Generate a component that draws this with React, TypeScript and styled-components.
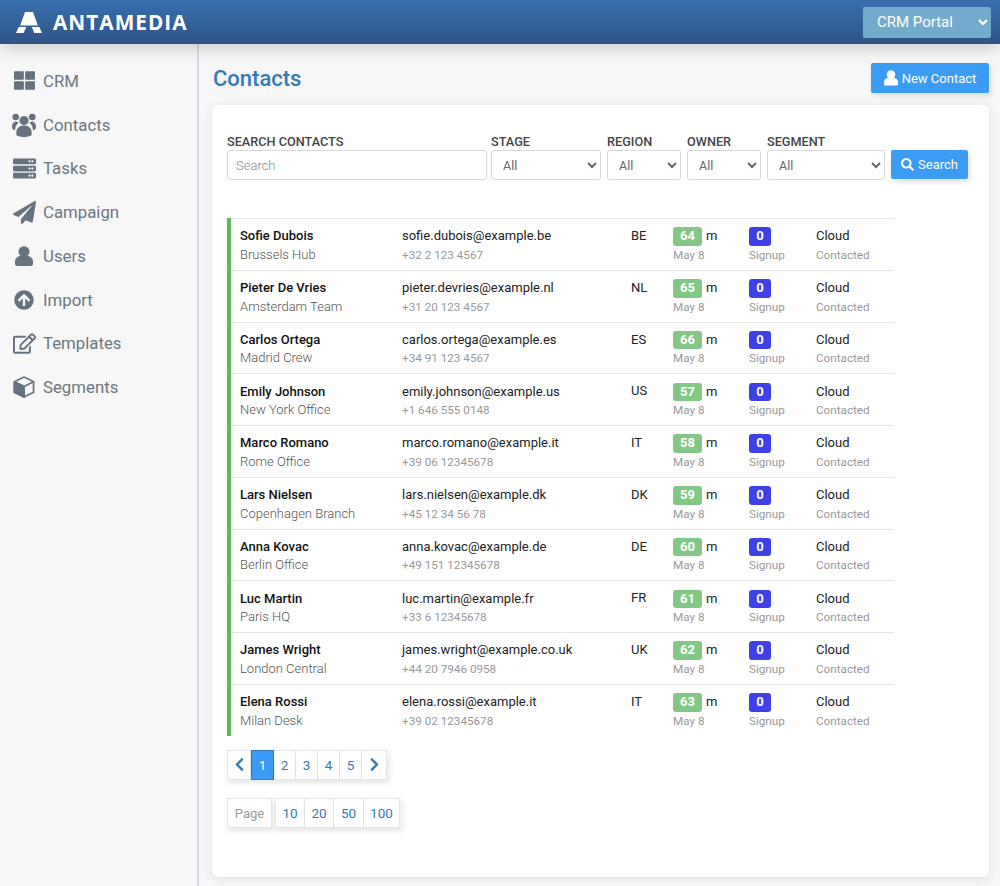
import React from "react"
import styled, { createGlobalStyle } from "styled-components"
import {
  FaThLarge,
  FaServer,
  FaPaperPlane,
  FaArrowCircleUp,
  FaRegEdit,
  FaSearch,
  FaChevronLeft,
  FaChevronRight,
} from "react-icons/fa"

const GlobalStyle = createGlobalStyle`
  html, body {
    margin: 0;
    padding: 0;
    height: 100%;
    overflow: hidden;
    background: #f7f7f7;
    font-family: Roboto, "Liberation Sans", Arial, sans-serif;
    font-size: 13px;
    color: #222;
  }
  * { box-sizing: border-box; }
`

const Page = styled.div`
  display: flex;
  flex-direction: column;
  height: 886px;
`
const Header = styled.header`
  position: relative;
  z-index: 2;
  flex: 0 0 44px;
  display: flex;
  align-items: center;
  justify-content: space-between;
  padding: 0 9px 0 16px;
  background: linear-gradient(#3a6fb0, #2f5384);
  box-shadow: 0 2px 18px rgba(0, 0, 0, 0.22);
`
const Brand = styled.div`
  display: flex;
  align-items: center;
  gap: 11px;
`
const BrandName = styled.span`
  font-family: "Open Sans", "Liberation Sans", sans-serif;
  font-weight: 700;
  font-size: 20.8px;
  letter-spacing: 1px;
  color: #fff;
`
const PortalSelect = styled.select`
  width: 128px;
  height: 31px;
  padding: 0 0 0 10px;
  border: none;
  border-radius: 2px;
  background-color: #74abcd;
  color: #fff;
  font-family: inherit;
  font-size: 15px;
`
const Body = styled.div`
  flex: 1;
  display: flex;
  min-height: 0;
`
const Sidebar = styled.nav`
  flex: 0 0 199px;
  display: flex;
  flex-direction: column;
  padding-top: 15px;
  border-right: 2px solid #cfdbe6;
  background: #f7f7f7;
`
const NavItem = styled.a`
  display: flex;
  align-items: center;
  height: 43.75px;
  color: #6b7680;
  font-size: 16.8px;
`
const NavIcon = styled.span`
  flex: 0 0 24px;
  display: flex;
  align-items: center;
  justify-content: center;
  margin: 0 7px 0 12px;
  color: #66727d;
`
const Main = styled.main`
  flex: 1;
  display: flex;
  flex-direction: column;
  min-width: 0;
  padding: 19px 11px 9px 13px;
`
const TitleRow = styled.div`
  display: flex;
  align-items: center;
  justify-content: space-between;
  height: 30px;
  margin-bottom: 12px;
`
const Title = styled.h1`
  margin: 0 0 0 1px;
  font-size: 22px;
  font-weight: 500;
  color: #337ab7;
`
const PrimaryButton = styled.button<{ $width: number; $height: number }>`
  display: inline-flex;
  align-items: center;
  justify-content: center;
  gap: 4px;
  height: ${(p) => p.$height}px;
  width: ${(p) => p.$width}px;
  padding: 0;
  border: none;
  border-radius: 2px;
  background: #3a9cf4;
  color: #fff;
  font-family: inherit;
  font-size: 13px;
  box-shadow: 2px 3px 6px rgba(0, 0, 0, 0.12);
`
const SearchButton = styled(PrimaryButton)`
  margin-bottom: 1px;
`
const Card = styled.section`
  flex: 1;
  padding: 28px 15px 0;
  border-radius: 6px;
  background: #fff;
  box-shadow: 0 2px 10px rgba(0, 0, 0, 0.1);
`
const Filters = styled.form`
  display: flex;
  align-items: flex-end;
  margin-bottom: 38px;
`
const Field = styled.label<{ $width: number; $gap: number }>`
  display: flex;
  flex-direction: column;
  flex: 0 0 ${(p) => p.$width}px;
  margin-right: ${(p) => p.$gap}px;
`
const FieldLabel = styled.span`
  height: 17px;
  font-size: 12.7px;
  font-weight: 500;
  line-height: 17px;
  color: #444;
  text-transform: uppercase;
  white-space: nowrap;
`
const TextInput = styled.input`
  height: 30px;
  padding: 0 8px;
  border: 1px solid #d9d9d9;
  border-radius: 3px;
  font-family: inherit;
  font-size: 13px;
  font-weight: 300;
  &::placeholder { color: #8a8a8a; }
`
const Select = styled.select`
  height: 30px;
  padding: 0 0 0 7px;
  border: 1px solid #d9d9d9;
  border-radius: 3px;
  background-color: #fff;
  color: #666;
  font-family: inherit;
  font-size: 12.5px;
`
const Rows = styled.div`
  width: 667px;
  border-left: 4px solid #5cb85c;
`
const Row = styled.div`
  display: grid;
  grid-template-columns: 162px 229px 42px 76px 67px 1fr;
  align-items: center;
  height: 51.75px;
  padding: 3px 0 0 9px;
  border-top: 1px solid #e6e6e6;
`
const Cell = styled.div`
  display: flex;
  flex-direction: column;
  line-height: 18.4px;
  white-space: nowrap;
`
const CountryCell = styled(Cell)`
  align-self: start;
  margin-top: 5px;
`
const Name = styled.strong`
  font-weight: 500;
  color: #111;
`
const Place = styled.span`
  font-weight: 300;
  color: #555;
`
const Muted = styled.span`
  font-size: 11.7px;
  color: #999;
`
const ScoreLine = styled.span`
  display: flex;
  align-items: center;
  gap: 4px;
`
const Badge = styled.span<{ $width: number; $bg: string }>`
  display: inline-flex;
  align-items: center;
  justify-content: center;
  width: ${(p) => p.$width}px;
  height: 18.4px;
  border-radius: 3px;
  background: ${(p) => p.$bg};
  color: #fff;
  font-weight: 700;
`
const Pager = styled.div<{ $top: number }>`
  display: flex;
  width: fit-content;
  margin-top: ${(p) => p.$top}px;
`
const PageCell = styled.a<{
  $width: number
  $gap?: number
  $joined?: boolean
  $active?: boolean
  $muted?: boolean
}>`
  display: flex;
  align-items: center;
  justify-content: center;
  width: ${(p) => p.$width}px;
  height: 30px;
  padding-top: ${(p) => (p.$muted ? 2 : 0)}px;
  margin-left: ${(p) => p.$gap ?? 0}px;
  border: 1px solid ${(p) => (p.$active ? "#337ab7" : "#e6e6e6")};
  border-left-width: ${(p) => (p.$joined ? 0 : 1)}px;
  background: ${(p) => (p.$active ? "#3a9cf4" : "#fff")};
  color: ${(p) => (p.$active ? "#fff" : p.$muted ? "#999" : "#337ab7")};
  box-shadow: 2px 3px 6px rgba(0, 0, 0, 0.1);
  font-size: ${(p) => (p.$muted ? 13 : 13.5)}px;
`

type IconProps = { size?: number }

const Logo = () => (
  <svg width="26" height="21" viewBox="0 0 26 21" fill="#fff">
    <path d="M9 0h8l4.800 13.500H4.200z" />
    <path d="M2.600 15h7.700L7.600 21H0z" />
    <path d="M15.700 15h7.700L26 21h-7.600z" />
  </svg>
)

const PersonIcon = ({ size = 18 }: IconProps) => (
  <svg width={size} height={(size * 20) / 18} viewBox="0 0 18 20" fill="currentColor">
    <circle cx="9" cy="5.700" r="5.500" />
    <path d="M0 15.500c0-3.500 3-5.500 6-5.500h6c3 0 6 2 6 5.500V18c0 1.200-1 2-2 2H2c-1 0-2-.8-2-2z" />
  </svg>
)

const GroupIcon = ({ size = 24 }: IconProps) => (
  <svg width={size} height={size} viewBox="0 0 24 24" fill="currentColor">
    <circle cx="12" cy="7.500" r="4.600" />
    <circle cx="3.700" cy="4" r="3.300" />
    <circle cx="20.300" cy="4" r="3.300" />
    <path d="M4.300 20c0-5 3-7.500 7.700-7.500s7.700 2.500 7.700 7.500v1.500c0 1.500-4 2.500-7.700 2.500s-7.700-1-7.700-2.500z" />
    <path d="M0 14.500c0-3.500 1.500-6 3.700-6 1 0 2 .4 2.900 1.200-2 1.500-3.400 3.800-3.600 7.500C1.300 17 0 16 0 14.500z" />
    <path d="M24 14.500c0-3.500-1.500-6-3.700-6-1 0-2 .4-2.900 1.200 2 1.500 3.400 3.800 3.600 7.500 1.700-.2 3-1.200 3-2.700z" />
  </svg>
)

const CubeIcon = ({ size = 22 }: IconProps) => (
  <svg width={size} height={size} viewBox="0 0 22 23" fill="none" stroke="currentColor" strokeWidth="1.800" strokeLinejoin="round">
    <path d="M11 1l10 5v11l-10 5-10-5V6z" />
    <path d="M1 6l10 5 10-5M11 11v11" />
    <path fill="currentColor" d="M1 6l10 5v11l-10-5z" />
  </svg>
)

const nav = [
  { label: "CRM", icon: FaThLarge, size: 21 },
  { label: "Contacts", icon: GroupIcon, size: 24 },
  { label: "Tasks", icon: FaServer, size: 23 },
  { label: "Campaign", icon: FaPaperPlane, size: 23 },
  { label: "Users", icon: PersonIcon, size: 18 },
  { label: "Import", icon: FaArrowCircleUp, size: 20 },
  { label: "Templates", icon: FaRegEdit, size: 23 },
  { label: "Segments", icon: CubeIcon, size: 22 },
]

const contacts = [
  ["Sofie Dubois", "Brussels Hub", "sofie.dubois@example.be", "+32 2 123 4567", "BE", 64],
  ["Pieter De Vries", "Amsterdam Team", "pieter.devries@example.nl", "+31 20 123 4567", "NL", 65],
  ["Carlos Ortega", "Madrid Crew", "carlos.ortega@example.es", "+34 91 123 4567", "ES", 66],
  ["Emily Johnson", "New York Office", "emily.johnson@example.us", "+1 646 555 0148", "US", 57],
  ["Marco Romano", "Rome Office", "marco.romano@example.it", "+39 06 12345678", "IT", 58],
  ["Lars Nielsen", "Copenhagen Branch", "lars.nielsen@example.dk", "+45 12 34 56 78", "DK", 59],
  ["Anna Kovac", "Berlin Office", "anna.kovac@example.de", "+49 151 12345678", "DE", 60],
  ["Luc Martin", "Paris HQ", "luc.martin@example.fr", "+33 6 12345678", "FR", 61],
  ["James Wright", "London Central", "james.wright@example.co.uk", "+44 20 7946 0958", "UK", 62],
  ["Elena Rossi", "Milan Desk", "elena.rossi@example.it", "+39 02 12345678", "IT", 63],
]

const filters = [
  { label: "Stage", width: 110, gap: 6 },
  { label: "Region", width: 74, gap: 6 },
  { label: "Owner", width: 74, gap: 6 },
  { label: "Segment", width: 118, gap: 6 },
]

export default function App() {
  return (
    <Page>
      <GlobalStyle />
      <Header>
        <Brand>
          <Logo />
          <BrandName>ANTAMEDIA</BrandName>
        </Brand>
        <PortalSelect defaultValue="CRM Portal">
          <option>CRM Portal</option>
        </PortalSelect>
      </Header>
      <Body>
        <Sidebar>
          {nav.map(({ label, icon: Icon, size }) => (
            <NavItem key={label}>
              <NavIcon>
                <Icon size={size} />
              </NavIcon>
              {label}
            </NavItem>
          ))}
        </Sidebar>
        <Main>
          <TitleRow>
            <Title>Contacts</Title>
            <PrimaryButton $width={118} $height={30}>
              <PersonIcon size={14} />
              New Contact
            </PrimaryButton>
          </TitleRow>
          <Card>
            <Filters>
              <Field $width={260} $gap={4}>
                <FieldLabel>Search Contacts</FieldLabel>
                <TextInput placeholder="Search" />
              </Field>
              {filters.map((f) => (
                <Field key={f.label} $width={f.width} $gap={f.gap}>
                  <FieldLabel>{f.label}</FieldLabel>
                  <Select>
                    <option>All</option>
                  </Select>
                </Field>
              ))}
              <SearchButton $width={77} $height={29} type="button">
                <FaSearch size={13} />
                Search
              </SearchButton>
            </Filters>
            <Rows>
              {contacts.map((c) => (
                <Row key={c[0]}>
                  <Cell>
                    <Name>{c[0]}</Name>
                    <Place>{c[1]}</Place>
                  </Cell>
                  <Cell>
                    <span>{c[2]}</span>
                    <Muted>{c[3]}</Muted>
                  </Cell>
                  <CountryCell>{c[4]}</CountryCell>
                  <Cell>
                    <ScoreLine>
                      <Badge $width={29} $bg="#82c785">{c[5]}</Badge>m
                    </ScoreLine>
                    <Muted>May 8</Muted>
                  </Cell>
                  <Cell>
                    <ScoreLine>
                      <Badge $width={22} $bg="#4040e8">0</Badge>
                    </ScoreLine>
                    <Muted>Signup</Muted>
                  </Cell>
                  <Cell>
                    <span>Cloud</span>
                    <Muted>Contacted</Muted>
                  </Cell>
                </Row>
              ))}
            </Rows>
            <Pager $top={14}>
              <PageCell $width={24}><FaChevronLeft size={15} /></PageCell>
              <PageCell $width={23} $active>1</PageCell>
              {[2, 3, 4, 5].map((n) => (
                <PageCell key={n} $width={22} $joined>{n}</PageCell>
              ))}
              <PageCell $width={25} $joined><FaChevronRight size={15} /></PageCell>
            </Pager>
            <Pager $top={18}>
              <PageCell $width={45} $muted>Page</PageCell>
              <PageCell $width={30} $gap={3}>10</PageCell>
              <PageCell $width={29} $joined>20</PageCell>
              <PageCell $width={30} $joined>50</PageCell>
              <PageCell $width={36} $joined>100</PageCell>
            </Pager>
          </Card>
        </Main>
      </Body>
    </Page>
  )
}
